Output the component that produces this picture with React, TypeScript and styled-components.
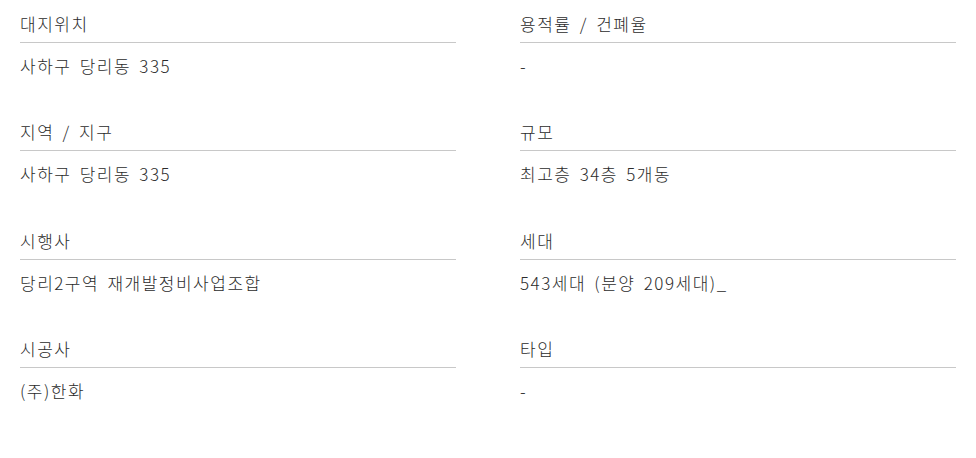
import styled, { createGlobalStyle } from "styled-components";

const GlobalStyle = createGlobalStyle`
  html, body {
    margin: 0;
    padding: 0;
    background: #fff;
  }
  body {
    font-family: "Noto Sans CJK KR", "Noto Sans", sans-serif;
    color: #2b2b2b;
  }
`;

const items = [
  { label: "대지위치", value: "사하구 당리동 335" },
  { label: "용적률 / 건폐율", value: "-" },
  { label: "지역 / 지구", value: "사하구 당리동 335" },
  { label: "규모", value: "최고층 34층 5개동" },
  { label: "시행사", value: "당리2구역 재개발정비사업조합" },
  { label: "세대", value: "543세대 (분양 209세대)_" },
  { label: "시공사", value: "(주)한화" },
  { label: "타입", value: "-" },
];

const App = () => {
  return (
    <>
      <GlobalStyle />
      <InfoGrid>
        {items.map((item) => (
          <InfoItem key={item.label}>
            <Label>{item.label}</Label>
            <Value>{item.value}</Value>
          </InfoItem>
        ))}
      </InfoGrid>
    </>
  );
};

export default App;

const InfoGrid = styled.div`
  display: grid;
  grid-template-columns: 436px 436px;
  column-gap: 64px;
  padding: 12px 20px 0 20px;
`;

const InfoItem = styled.div`
  display: flex;
  flex-direction: column;
  margin-bottom: 42.33px;
`;

const Label = styled.div`
  font-size: 17px;
  font-weight: 300;
  line-height: 24px;
  padding-bottom: 6px;
  border-bottom: 1px solid #c8c8c8;
  letter-spacing: 1.5px;
  word-spacing: 3px;
`;

const Value = styled.div`
  margin-top: 11px;
  font-size: 17px;
  font-weight: 300;
  line-height: 24px;
  letter-spacing: 1.5px;
  word-spacing: 3px;
`;
